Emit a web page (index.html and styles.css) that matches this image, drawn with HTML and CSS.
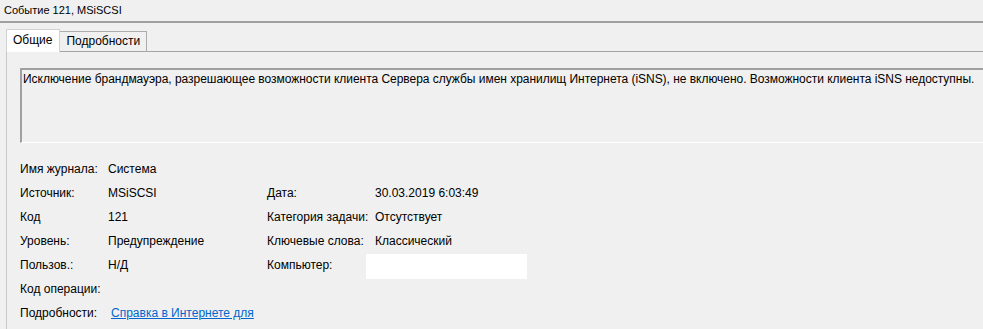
FILE: index.html
```html
<!DOCTYPE html>
<html lang="ru">
<head>
<meta charset="utf-8">
<title>Событие 121, MSiSCSI</title>
<link rel="stylesheet" href="styles.css">
</head>
<body>
<div class="window">
  <div class="titlebar">Событие 121, MSiSCSI</div>
  <div class="tabs">
    <div class="tab active">Общие</div>
    <div class="tab">Подробности</div>
    <div class="tab-fill"></div>
  </div>
  <div class="panel">
    <div class="desc">Исключение брандмауэра, разрешающее возможности клиента Сервера службы имен хранилищ Интернета (iSNS), не включено. Возможности клиента iSNS недоступны.</div>
    <div class="fields">
      <div class="lbl">Имя журнала:</div><div class="val">Система</div><div></div><div></div>
      <div class="lbl">Источник:</div><div class="val">MSiSCSI</div><div class="lbl">Дата:</div><div class="val">30.03.2019 6:03:49</div>
      <div class="lbl">Код</div><div class="val">121</div><div class="lbl">Категория задачи:</div><div class="val">Отсутствует</div>
      <div class="lbl">Уровень:</div><div class="val">Предупреждение</div><div class="lbl">Ключевые слова:</div><div class="val">Классический</div>
      <div class="lbl">Пользов.:</div><div class="val">Н/Д</div><div class="lbl">Компьютер:</div><div class="val"><span class="redact"></span></div>
      <div class="lbl">Код операции:</div><div class="val"></div><div></div><div></div>
      <div class="lbl">Подробности:</div><div class="val"><a class="link" href="#">Справка в Интернете для </a></div><div></div><div></div>
    </div>
  </div>
</div>
</body>
</html>
```

FILE: styles.css
```css
html, body {
  margin: 0;
  padding: 0;
  background: #f0f0f0;
  overflow: hidden;
}
body {
  font-family: "Liberation Sans", "Noto Sans", sans-serif;
  font-size: 12px;
  color: #000;
}
.window {
  width: 983px;
  height: 329px;
  overflow: hidden;
}
.titlebar {
  height: 21px;
  line-height: 21px;
  padding-left: 4px;
  font-size: 11px;
  border-bottom: 2px solid #a0a0a0;
  white-space: nowrap;
}
.tabs {
  display: flex;
  align-items: flex-end;
  height: 29px;
  padding-left: 6px;
  box-sizing: border-box;
}
.tab {
  box-sizing: border-box;
  height: 21px;
  line-height: 19px;
  padding: 0 6px;
  border: 1px solid #adadad;
  border-bottom: 1px solid #a5a5a5;
  background: #f0f0f0;
  white-space: nowrap;
  margin-left: -1px;
}
.tab.active {
  height: 23px;
  line-height: 21px;
  background: #fff;
  border-color: #d2d2d2;
  border-bottom: none;
  margin-left: 0;
  padding: 0 7px 0 6px;
  position: relative;
  z-index: 1;
}
.tab-fill {
  flex: 1;
  height: 1px;
  background: #a5a5a5;
}
.panel {
  margin-left: 6px;
  border-left: 1px solid #c8c8c8;
  height: 300px;
  padding: 16px 0 0 13px;
  box-sizing: border-box;
}
.desc {
  height: 75px;
  box-sizing: border-box;
  margin-right: -20px;
  border-top: 2px solid #a0a0a0;
  border-left: 2px solid #a0a0a0;
  border-bottom: 1px solid #fff;
  padding: 2px 0 0 1px;
  letter-spacing: -0.03px;
  white-space: nowrap;
}
.fields {
  display: grid;
  grid-template-columns: 88px 159px 108px 1fr;
  grid-auto-rows: 24px;
  margin-top: 14px;
  line-height: 24px;
  white-space: nowrap;
}
.val .redact {
  display: inline-block;
  vertical-align: top;
  width: 161px;
  height: 25px;
  margin-left: -9px;
  margin-top: 1px;
  background: #fff;
}
.link {
  color: #0066cc;
  text-decoration: underline;
  margin-left: 3px;
}
```
